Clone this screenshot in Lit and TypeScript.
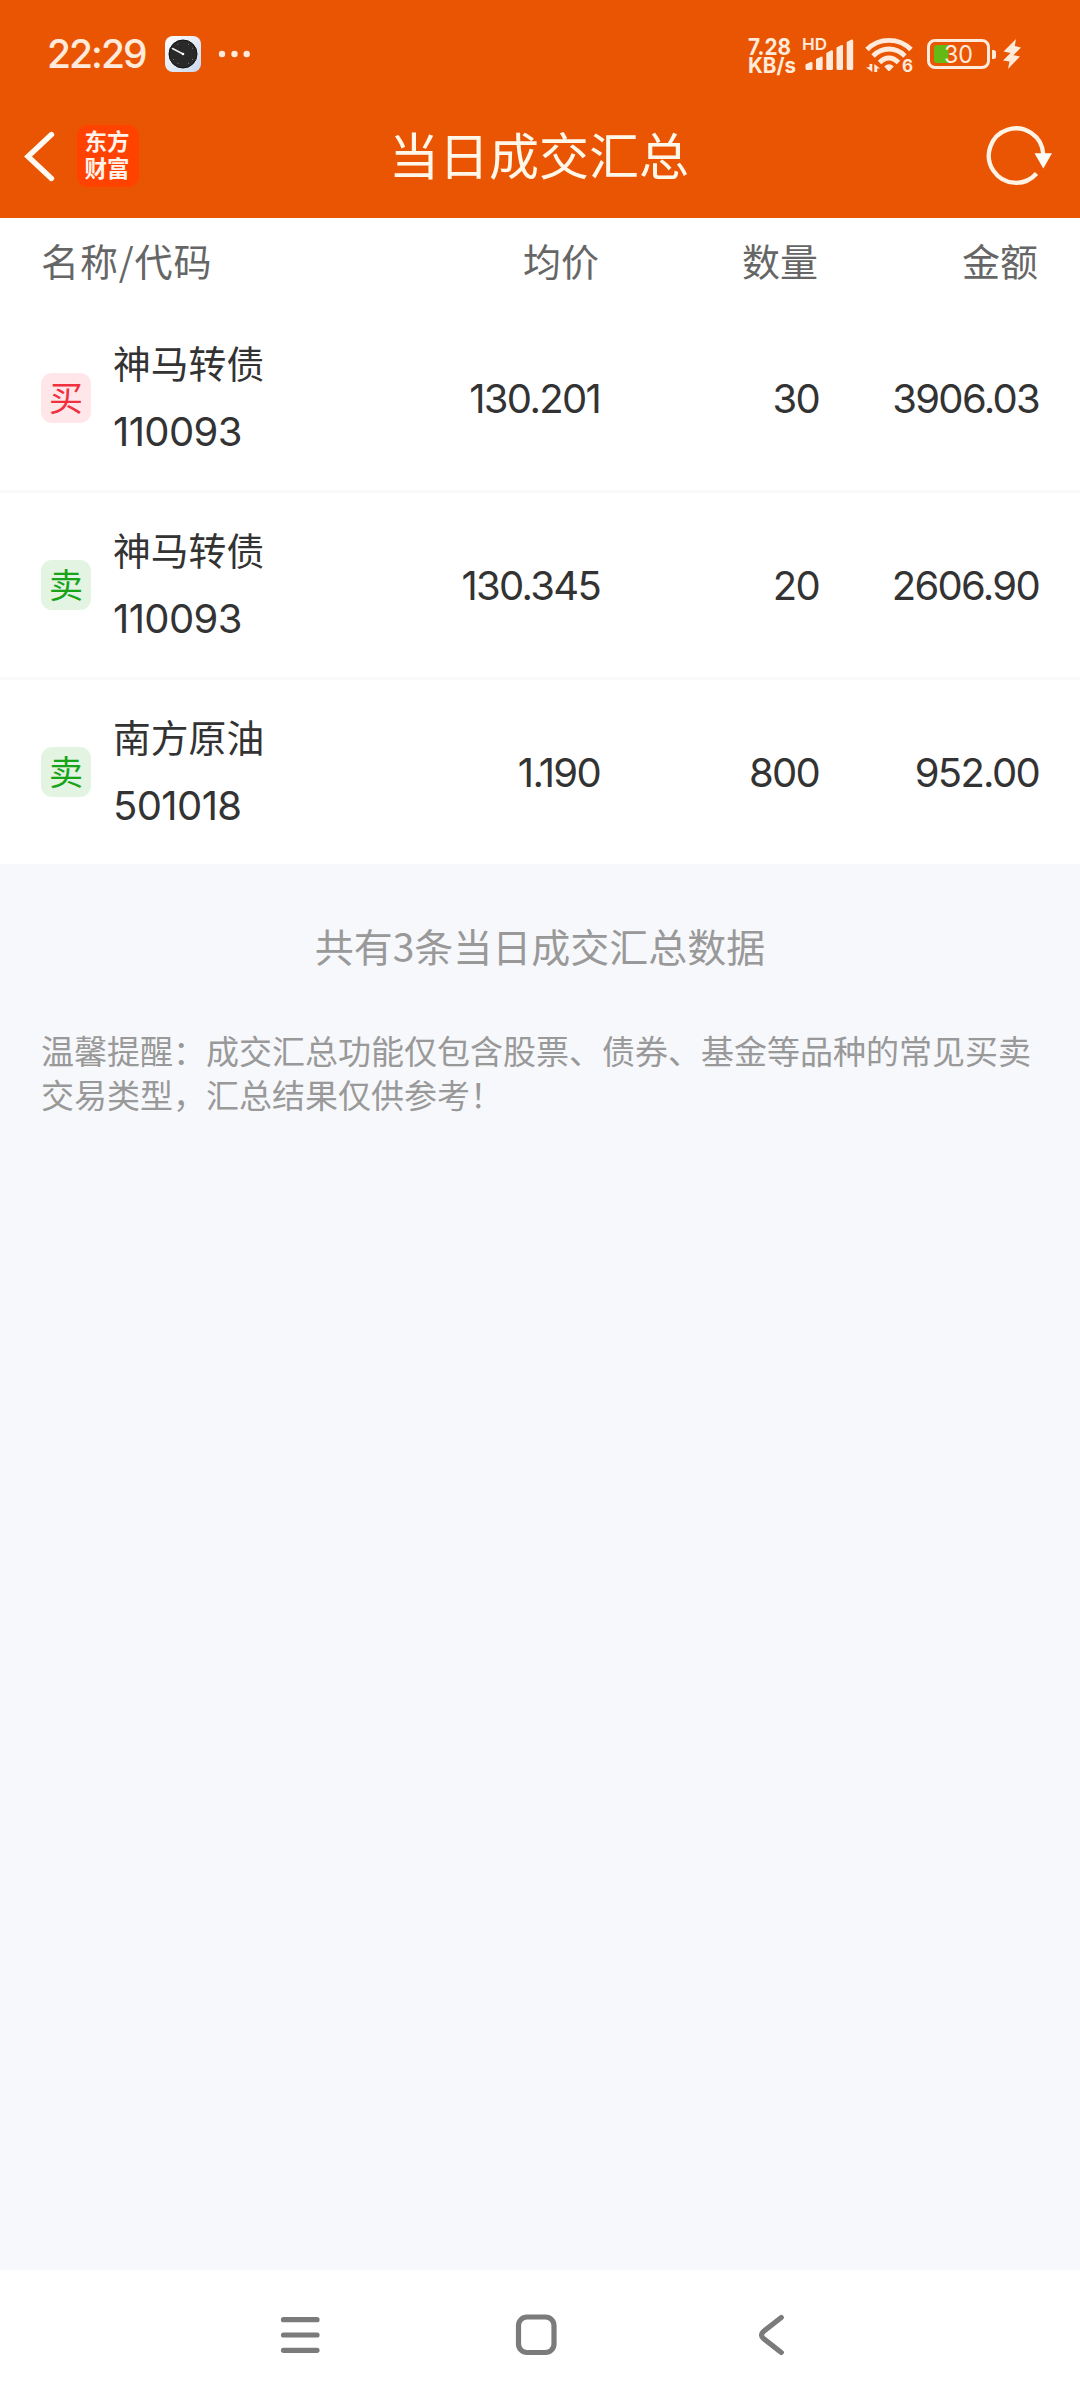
import { LitElement, html, css } from "lit";
import { customElement, property } from "lit/decorators.js";
import { classMap } from "lit/directives/class-map.js";

interface Deal {
  side: "buy" | "sell";
  name: string;
  code: string;
  price: string;
  quantity: string;
  amount: string;
}

const deals: Deal[] = [
  { side: "buy", name: "神马转债", code: "110093", price: "130.201", quantity: "30", amount: "3906.03" },
  { side: "sell", name: "神马转债", code: "110093", price: "130.345", quantity: "20", amount: "2606.90" },
  { side: "sell", name: "南方原油", code: "501018", price: "1.190", quantity: "800", amount: "952.00" },
];

@customElement("status-bar")
class StatusBar extends LitElement {
  static styles = css`
    :host {
      display: flex;
      align-items: center;
      justify-content: space-between;
      height: 108px;
      padding: 0 56px 0 47px;
      box-sizing: border-box;
      color: #ffeadb;
    }
    .left {
      display: flex;
      align-items: center;
    }
    .time {
      width: 118px;
      font: 500 39px/44px Inter, sans-serif;
      letter-spacing: -2px;
      white-space: nowrap;
    }
    .dots {
      margin-left: 17px;
    }
    svg {
      display: block;
    }
    .label {
      font-family: Inter, sans-serif;
      fill: #ffeadb;
    }
    .bold {
      font-weight: 700;
    }
    .semi {
      font-weight: 600;
    }
  `;

  render() {
    return html`
      <div class="left">
        <span class="time">22:29</span>
        <svg width="36" height="36" viewBox="0 0 36 36">
          <defs>
            <linearGradient id="case" x1="0" y1="0" x2="1" y2="1">
              <stop offset="0" stop-color="#fff" />
              <stop offset="1" stop-color="#c9d8ee" />
            </linearGradient>
          </defs>
          <rect width="36" height="36" rx="8" fill="url(#case)" />
          <circle cx="18" cy="18" r="14" fill="#292929" stroke="#111" stroke-width="1" />
          <path d="M18 18 7.5 12.5" stroke="#eee" stroke-width="1.5" stroke-linecap="round" />
          <circle cx="18" cy="18" r="1.3" fill="#fff" />
          <path
            d="M12.5 8.2h.8M23 8.2h.8M27 12.3h.8M27 23.5h.8M23 27.3h.8M12.5 27.3h.8M8 23.5h.8"
            stroke="#aaa"
            stroke-width=".8"
          />
        </svg>
        <svg class="dots" width="34" height="8" viewBox="0 0 34 8" fill="#ffeadb">
          <circle cx="4" cy="4" r="3.2" />
          <circle cx="16.5" cy="4" r="3.2" />
          <circle cx="28.7" cy="4" r="3.2" />
        </svg>
      </div>
      <svg width="278" height="44" viewBox="746 32 278 44" fill="#ffeadb">
        <text class="label bold" x="748" y="54.5" font-size="23" textLength="43" lengthAdjust="spacingAndGlyphs">7.28</text>
        <text class="label bold" x="748" y="72.5" font-size="21" textLength="48" lengthAdjust="spacingAndGlyphs">KB/s</text>
        <text class="label semi" x="802" y="50" font-size="16.5" textLength="25" lengthAdjust="spacingAndGlyphs">HD</text>
        <path
          d="M805.5 64.5 810.5 62Q812.5 61.500 812.500 63V68.500Q812.500 70 811 70H807Q805.500 70 805.500 68.500ZM816 59 821 56.700Q822.700 56.200 822.700 58V68.500Q822.700 70 821.200 70H817.500Q816 70 816 68.500ZM826.300 53 831.300 50.300Q833 50 833 51.500V68.500Q833 70 831.500 70H827.800Q826.300 70 826.300 68.500ZM836.500 47.500 841.500 45Q843 44.500 843 46V68.500Q843 70 841.500 70H838Q836.500 70 836.500 68.500ZM846.700 42 851.500 39.500Q853.200 39 853.200 41V68.500Q853.200 70 851.700 70H848.200Q846.700 70 846.700 68.500Z"
        />
        <g fill="none" stroke="#ffeadb" stroke-width="4.800">
          <path d="M867 49.500Q876 40.300 889 40.300T911 49.500" />
          <path d="M873 56Q880 49 889 49T905 56" />
          <path d="M879.500 62.500Q884 58 889 58T898.500 62.500" />
        </g>
        <path d="M884.200 66.500Q889 62 893.800 66.500L889.800 70.700Q889 71.500 888.200 70.700Z" />
        <path d="M869.500 64H872.300V72L866 67.300H869.500ZM874.300 64 880 68.500H877.200V72H874.300Z" />
        <text class="label bold" x="902" y="72" font-size="17">6</text>
        <rect x="928.500" y="40.500" width="60" height="27" rx="6.500" fill="none" stroke="#ffeadb" stroke-width="3" />
        <path d="M992 50h1.500q2.500 0 2.500 2.500v4q0 2.500-2.500 2.500h-1.500z" />
        <path d="M937 45H948.500V63H937Q934 63 934 60V48Q934 45 937 45Z" fill="#64b915" />
        <text class="label" x="944" y="63" font-size="24.500" textLength="29" lengthAdjust="spacingAndGlyphs">30</text>
        <path d="M1016 39 1003.500 51.500 1010.500 53 1003 60.500 1009.500 61.500 1008 69 1020 56.500 1013.500 55.200 1021 47.500 1014.800 46Z" />
      </svg>
    `;
  }
}

@customElement("title-bar")
class TitleBar extends LitElement {
  static styles = css`
    :host {
      display: grid;
      grid-template-columns: 1fr auto 1fr;
      align-items: center;
      height: 110px;
      padding: 0 24px 15px 22px;
      box-sizing: border-box;
      color: #fff8ee;
    }
    .left {
      display: flex;
      align-items: center;
      gap: 21px;
    }
    .logo {
      display: flex;
      flex-direction: column;
      justify-content: center;
      align-items: center;
      width: 62px;
      height: 62px;
      padding: 0 2px 4px 0;
      box-sizing: border-box;
      border-radius: 11px;
      background: #ff4200;
      font: 700 22.500px/26.500px "Noto Sans CJK SC", sans-serif;
      color: #fff3ec;
    }
    .title {
      margin: 0;
      padding-bottom: 6px;
      font: 400 50px/60px "Noto Sans CJK SC", sans-serif;
      color: #fff8ea;
    }
    .refresh {
      justify-self: end;
      margin-right: 2px;
    }
    svg {
      display: block;
    }
  `;

  render() {
    return html`
      <div class="left">
        <svg width="34" height="54" viewBox="22 128 34 54">
          <path d="M51.500 133.500 28 155.500 51.500 177.500" fill="none" stroke="#fffaf4" stroke-width="5.400" stroke-linecap="round" />
        </svg>
        <div class="logo"><span>东方</span><span>财富</span></div>
      </div>
      <h1 class="title">当日成交汇总</h1>
      <svg class="refresh" width="68" height="62" viewBox="986 125 68 62">
        <path d="M1043.200 154A27.200 27.200 0 1 0 1036.500 173.500" fill="none" stroke="#fff3e6" stroke-width="4.300" />
        <path d="M1034.500 153.300H1052L1043.300 168.500Z" fill="#fffdf8" />
      </svg>
    `;
  }
}

@customElement("deal-row")
class DealRow extends LitElement {
  static styles = css`
    :host {
      display: grid;
      grid-template-columns: 72px 1fr 220px 219px 220px;
      align-items: center;
      height: 184px;
      padding: 0 41px;
      box-sizing: border-box;
      color: #333;
      background: #fff;
    }
    .badge {
      display: flex;
      align-items: center;
      justify-content: center;
      width: 50px;
      height: 50px;
      border-radius: 11px;
      font: 400 34px/48px "Noto Sans CJK SC", sans-serif;
    }
    .badge span {
      padding-bottom: 3px;
    }
    .buy {
      color: #f0303f;
      background: #ffe7e9;
    }
    .sell {
      color: #18a318;
      background: #e3f4e3;
    }
    .stock {
      display: flex;
      flex-direction: column;
    }
    .name {
      padding-bottom: 6px;
      font: 400 37.800px/61px "Noto Sans CJK SC", sans-serif;
    }
    .code,
    .value {
      font: 400 40px/67px Inter, sans-serif;
    }
    .code {
      letter-spacing: -0.600px;
    }
    .value {
      text-align: right;
      letter-spacing: -1.700px;
    }
  `;

  @property({ attribute: false }) deal!: Deal;

  render() {
    const { side, name, code, price, quantity, amount } = this.deal;
    return html`
      <div class=${classMap({ badge: true, [side]: true })}><span>${side === "buy" ? "买" : "卖"}</span></div>
      <div class="stock"><span class="name">${name}</span><span class="code">${code}</span></div>
      <span class="value">${price}</span>
      <span class="value">${quantity}</span>
      <span class="value">${amount}</span>
    `;
  }
}

@customElement("nav-bar")
class NavBar extends LitElement {
  static styles = css`
    :host {
      display: flex;
      align-items: center;
      justify-content: center;
      gap: 188px;
      height: 130px;
      padding-right: 8px;
      box-sizing: border-box;
      background: #fff;
    }
    svg {
      display: block;
      fill: none;
      stroke: #7b7b7b;
      stroke-width: 5.200;
      stroke-linecap: round;
      stroke-linejoin: round;
    }
  `;

  render() {
    return html`
      <svg width="48" height="48" viewBox="0 0 48 48"><path d="M7.500 8.700H41M7.500 24H41M7.500 39.300H41" /></svg>
      <svg width="48" height="48" viewBox="0 0 48 48"><rect x="6.500" y="6" width="35.500" height="35.500" rx="8.500" /></svg>
      <svg width="48" height="48" viewBox="0 0 48 48"><path d="M33.300 6.500 15.500 20.500Q11.500 24 15.500 27.500L33.300 41.500" /></svg>
    `;
  }
}

@customElement("app-root")
class AppRoot extends LitElement {
  static styles = css`
    :host {
      display: flex;
      flex-direction: column;
      width: 1080px;
      height: 2400px;
      background: #f7f8fb;
    }
    .header {
      background: #e95503;
    }
    .columns {
      display: grid;
      grid-template-columns: 1fr 220px 219px 220px;
      align-items: center;
      height: 88px;
      padding: 0 42px 5px 41px;
      box-sizing: border-box;
      background: #fff;
      color: #666;
      font: 400 38px/56px "Noto Sans CJK SC", sans-serif;
    }
    .heading {
      letter-spacing: 0.900px;
    }
    .number {
      text-align: right;
    }
    .list {
      display: flex;
      flex-direction: column;
      gap: 3px;
      background: #f8f9fa;
    }
    .body {
      flex: 1;
      color: #999;
    }
    .count {
      margin: 53px 0 0;
      text-align: center;
      font: 400 39px/56px "Noto Sans CJK SC", sans-serif;
    }
    .notice {
      margin: 56px 43px 0 41px;
      font: 400 33px/43.500px "Noto Sans CJK SC", sans-serif;
    }
  `;

  render() {
    return html`
      <header class="header">
        <status-bar></status-bar>
        <title-bar></title-bar>
      </header>
      <div class="columns">
        <span class="heading">名称/代码</span>
        <span class="number">均价</span>
        <span class="number">数量</span>
        <span class="number">金额</span>
      </div>
      <div class="list">${deals.map((deal) => html`<deal-row .deal=${deal}></deal-row>`)}</div>
      <main class="body">
        <p class="count">共有${deals.length}条当日成交汇总数据</p>
        <p class="notice">温馨提醒：成交汇总功能仅包含股票、债券、基金等品种的常见买卖交易类型，汇总结果仅供参考！</p>
      </main>
      <nav-bar></nav-bar>
    `;
  }
}
